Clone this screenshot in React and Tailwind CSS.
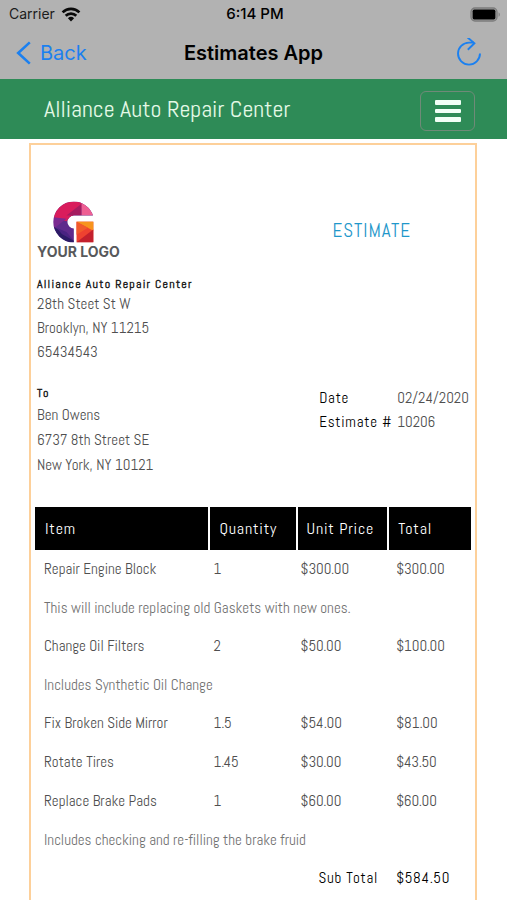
import React from "react";

const condensed =
  "font-['Abel','Roboto_Condensed','Liberation_Sans_Narrow','Open_Sans_Condensed',sans-serif]";

const rows = [
  { item: "Repair Engine Block", qty: "1", price: "$300.00", total: "$300.00", note: "This will include replacing old Gaskets with new ones." },
  { item: "Change Oil Filters", qty: "2", price: "$50.00", total: "$100.00", note: "Includes Synthetic Oil Change" },
  { item: "Fix Broken Side Mirror", qty: "1.5", price: "$54.00", total: "$81.00" },
  { item: "Rotate Tires", qty: "1.45", price: "$30.00", total: "$43.50" },
  { item: "Replace Brake Pads", qty: "1", price: "$60.00", total: "$60.00", note: "Includes checking and re-filling the brake fruid" },
];

function StatusBar() {
  return (
    <div className="grid h-7 grid-cols-3 items-center pl-[9px] pr-[6px] text-sm text-[#1c1c1c]">
      <div className="flex items-center gap-1.5">
        <span>Carrier</span>
        <svg className="h-[15px] w-5" viewBox="0 0 20 15" fill="none" stroke="#0a0a0a" strokeWidth="2.7" aria-hidden="true">
          <path d="M1.6 5.4a12 12 0 0 1 16.8 0" />
          <path d="M4.7 8.7a7.6 7.6 0 0 1 10.6 0" />
          <path d="M10 14.6 6.9 11.3a4.5 4.5 0 0 1 6.2 0z" fill="#0a0a0a" stroke="none" />
        </svg>
      </div>
      <span className="text-center text-[15px] font-medium text-black">6:14 PM</span>
      <svg className="h-[15px] w-[31px] justify-self-end" viewBox="0 0 31 15" aria-hidden="true">
        <rect x="1" y="1" width="26" height="13" rx="4" fill="#a3a3a3" stroke="#7c7c7c" strokeWidth="1.3" />
        <rect x="2.6" y="2.6" width="22.8" height="9.8" rx="1.6" fill="#000" />
        <path d="M28.6 5.2c1.6.7 1.6 3.9 0 4.6z" fill="#7c7c7c" />
      </svg>
    </div>
  );
}

function NavBar() {
  return (
    <div className="grid h-[51px] grid-cols-[1fr_auto_1fr] items-center pb-0.5 text-xl">
      <button type="button" className="flex items-center gap-2 pl-4 text-[#1b80f0]">
        <svg className="h-6 w-4" viewBox="0 0 16 24" fill="none" stroke="currentColor" strokeWidth="2.6" aria-hidden="true">
          <path d="M13.8 1.4 2.2 12l11.6 10.6" />
        </svg>
        Back
      </button>
      <h1 className="font-semibold text-black">Estimates App</h1>
      <button type="button" aria-label="Reload" className="mr-[25px] justify-self-end text-[#1b80f0]">
        <svg className="h-[30px] w-[26px]" viewBox="0 0 26 30" fill="none" stroke="currentColor" strokeWidth="1.9" aria-hidden="true">
          <path d="M24 15.6a11 11 0 1 1-11-11h5" />
          <path d="M11.6 -0.5 18.4 5.3 11.8 11.8" />
        </svg>
      </button>
    </div>
  );
}

function Logo() {
  return (
    <div className="flex flex-col">
      <svg className="ml-4 h-[42px] w-[41px]" viewBox="0 0 122 124" aria-hidden="true">
        <clipPath id="ring">
          <path d="M62 123A61 61 0 0 1 62 1 61 61 0 0 1 119 43H62A19 19 0 0 0 62 81Z" />
        </clipPath>
        <g clipPath="url(#ring)">
          <path d="M0 0H122V124H0Z" fill="#5f2a8c" />
          <path d="M0 0H85V20L40 60 0 48Z" fill="#d91c5c" />
          <path d="M85 8V43H40Z" fill="#a51c60" />
          <path d="M85 0H122V43H85Z" fill="#ee5f93" />
          <path d="M0 48 40 52 12 74 0 84Z" fill="#7b2a90" />
          <path d="M0 74 62 118V124H0Z" fill="#2c1b66" />
          <path d="M12 80 40 92 62 118 26 98Z" fill="#4a2382" />
        </g>
        <path d="M70 61H120V122H70Z" fill="#ee4230" />
        <path d="M70 61H120V88Z" fill="#f7941d" />
        <path d="M70 61 104 79 70 100Z" fill="#f15a2b" />
        <path d="M70 122 120 84V122Z" fill="#c3202d" />
      </svg>
      <span className="font-['Inter',sans-serif] text-sm font-bold leading-[18px] text-[#58595b]">
        YOUR LOGO
      </span>
    </div>
  );
}

export default function App() {
  return (
    <div className="flex min-h-screen flex-col bg-white">
      <header className="bg-[#b2b2b2] font-['Inter',sans-serif]">
        <StatusBar />
        <NavBar />
      </header>

      <div className="flex h-[60px] items-center justify-between bg-[#2e8b57] pl-11 pr-8">
        <a href="#home" className={`${condensed} text-2xl text-[#e4f9e6]`}>
          Alliance Auto Repair Center
        </a>
        <button
          type="button"
          aria-label="Menu"
          className="mt-1 flex h-10 w-[55px] flex-col items-center justify-center gap-1 rounded-md border border-[#6f8a78]"
        >
          <span className="h-[5px] w-[26px] rounded-[1px] bg-[#f1fff6]" />
          <span className="h-[4px] w-[26px] rounded-[1px] bg-[#f1fff6]" />
          <span className="h-[5px] w-[26px] rounded-[1px] bg-[#f1fff6]" />
        </button>
      </div>

      <main className={`${condensed} ml-[29px] mr-[30px] mt-1 flex-1 border-2 border-b-0 border-[#fdd09a] px-1 pt-14 text-[15px] text-[#4f4f4f]`}>
        <div className="flex items-center justify-between pl-0.5 pr-[60px]">
          <Logo />
          <h2 className="text-[19px] tracking-wider text-[#1f97ca]">ESTIMATE</h2>
        </div>

        <address className="mt-[15px] pl-0.5 not-italic leading-6">
          <strong className="block text-xs font-bold leading-4 tracking-widest text-[#222]">
            Alliance Auto Repair Center
          </strong>
          28th Steet St W
          <br />
          Brooklyn, NY 11215
          <br />
          65434543
        </address>

        <div className="mt-5 flex justify-between pl-0.5 pr-0.5">
          <address className="not-italic leading-[25px]">
            <strong className="block text-xs font-bold leading-[18px] tracking-widest text-[#222]">To</strong>
            Ben Owens
            <br />
            6737 8th Street SE
            <br />
            New York, NY 10121
          </address>
          <dl className="grid grid-cols-[78px_auto] content-start pt-0.5 leading-6">
            <dt className="whitespace-nowrap tracking-wider text-black">Date</dt>
            <dd>02/24/2020</dd>
            <dt className="whitespace-nowrap tracking-wider text-black">Estimate #</dt>
            <dd>10206</dd>
          </dl>
        </div>

        <table className="mt-[30px] w-full table-fixed text-left">
          <thead>
            <tr className="h-[43px] bg-black text-base tracking-wider text-white">
              <th scope="col" className="w-[40%] border-r-2 border-white pl-2.5 font-normal">Item</th>
              <th scope="col" className="w-[20%] border-r-2 border-white pl-[9px] font-normal">Quantity</th>
              <th scope="col" className="w-[21%] border-r-2 border-white pl-[9px] font-normal">Unit Price</th>
              <th scope="col" className="w-[19%] pl-[9px] font-normal">Total</th>
            </tr>
          </thead>
          <tbody>
            {rows.map((r) => (
              <React.Fragment key={r.item}>
                <tr className="h-[39px]">
                  <td className="pl-[9px]">{r.item}</td>
                  <td className="pl-1">{r.qty}</td>
                  <td className="pl-1">{r.price}</td>
                  <td className="pl-2">{r.total}</td>
                </tr>
                {r.note && (
                  <tr className="h-[38px] text-[#727272]">
                    <td colSpan={4} className="pl-[9px]">{r.note}</td>
                  </tr>
                )}
              </React.Fragment>
            ))}
          </tbody>
          <tfoot>
            <tr className="h-[39px] tracking-wider text-black">
              <th scope="row" colSpan={3} className="pr-2.5 text-right font-normal">Sub Total</th>
              <td className="pl-2">$584.50</td>
            </tr>
          </tfoot>
        </table>
      </main>
    </div>
  );
}
